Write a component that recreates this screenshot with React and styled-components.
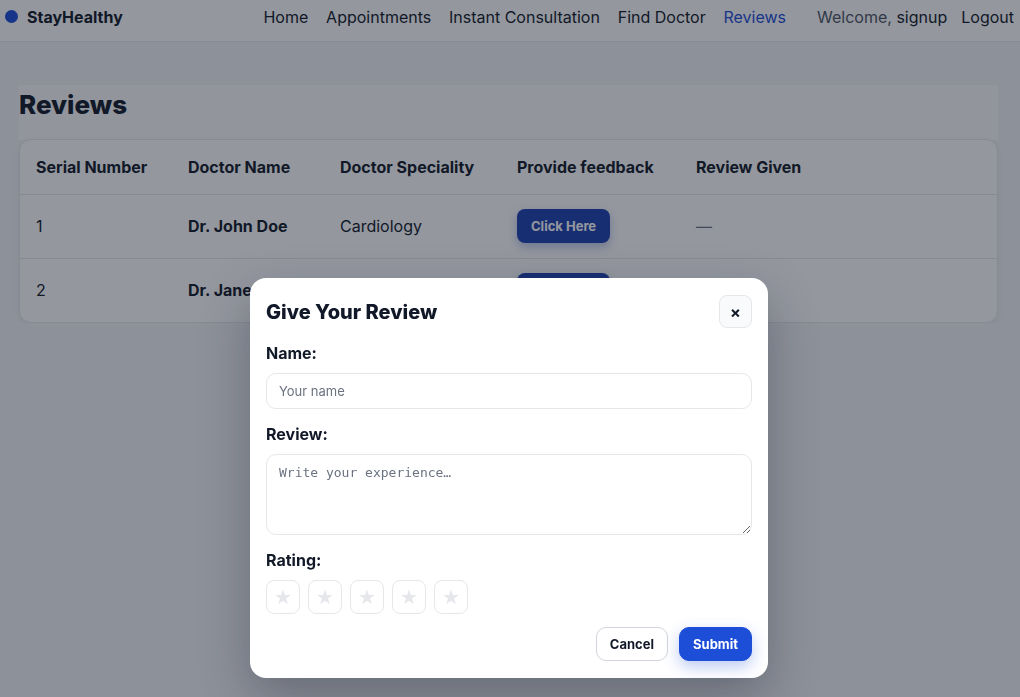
import React from 'react';
import styled, { createGlobalStyle } from 'styled-components';

const GlobalStyle = createGlobalStyle`
  * { box-sizing: border-box; }
  html, body {
    margin: 0;
    padding: 0;
    background: #f3f4f6;
    font-family: Inter, "Noto Sans", "Liberation Sans", sans-serif;
    color: #111827;
  }
`;

const Nav = styled.nav`
  display: flex;
  align-items: center;
  justify-content: space-between;
  height: 42px;
  padding: 0 6px 8px 5px;
  background: #ffffff;
  border-bottom: 1px solid #e5e7eb;
  font-size: 16px;
`;

const Brand = styled.div`
  display: flex;
  align-items: center;
  gap: 9px;
  font-weight: 700;
  font-size: 16px;
`;

const Dot = styled.span`
  width: 13px;
  height: 13px;
  border-radius: 50%;
  background: #1d4ed8;
`;

const NavRight = styled.div`
  display: flex;
  align-items: center;
`;

const Links = styled.ul`
  display: flex;
  gap: 17.8px;
  list-style: none;
  margin: 0 31px 0 0;
  padding: 0;
`;

const Link = styled.li`
  color: ${p => (p.$active ? '#1d4ed8' : '#111827')};
`;

const UserBox = styled.div`
  display: flex;
  gap: 14px;
`;

const Welcome = styled.span`
  color: #4b5563;
  b { font-weight: 400; color: #111827; }
`;

const Main = styled.main`
  padding: 43px 22px 0 19px;
`;

const TitleBar = styled.div`
  background: #fbfbfc;
  padding: 4px 0 19px;
`;

const Heading = styled.h1`
  margin: 0;
  font-size: 26px;
  line-height: 32px;
  font-weight: 800;
`;

const Card = styled.div`
  margin: -1px 0 0 0;
  background: #ffffff;
  border: 1px solid #e5e7eb;
  border-radius: 12px;
  overflow: hidden;
  box-shadow: 0 2px 6px rgba(15, 23, 42, 0.06);
`;

const Table = styled.table`
  width: 100%;
  border-collapse: collapse;
  font-size: 16px;
`;

const Th = styled.th`
  text-align: left;
  font-weight: 700;
  height: 54px;
  padding: 0 0 0 ${p => p.$pad || 0}px;
  width: ${p => p.$w || 'auto'};
  border-bottom: 1px solid #e5e7eb;
`;

const Td = styled.td`
  height: 64px;
  padding: 0 0 0 ${p => p.$pad || 0}px;
  font-weight: ${p => (p.$bold ? 700 : 400)};
  color: ${p => (p.$muted ? '#6b7280' : '#111827')};
`;

const Tr = styled.tr`
  & + & td { border-top: 1px solid #e5e7eb; }
`;

const ClickBtn = styled.button`
  height: 34px;
  padding: 0 14px;
  border: none;
  border-radius: 8px;
  background: #1e40af;
  color: #ffffff;
  font-family: inherit;
  font-size: 13px;
  font-weight: 700;
  box-shadow: 0 4px 10px rgba(30, 64, 175, 0.3);
`;

const Overlay = styled.div`
  position: fixed;
  inset: 0;
  background: rgba(17, 24, 39, 0.45);
  display: flex;
  justify-content: center;
  align-items: flex-start;
  padding: 278px 2px 0 0;
`;

const Modal = styled.div`
  width: 518px;
  background: #ffffff;
  border-radius: 16px;
  padding: 17px 16px 17px 16px;
  box-shadow: 0 20px 50px rgba(15, 23, 42, 0.3);
`;

const ModalHead = styled.div`
  display: flex;
  align-items: center;
  justify-content: space-between;
`;

const ModalTitle = styled.h2`
  margin: 0;
  font-size: 20px;
  font-weight: 800;
`;

const CloseBtn = styled.button`
  width: 33px;
  height: 33px;
  border: 1px solid #e5e7eb;
  border-radius: 8px;
  background: #f8fafc;
  font-family: inherit;
  font-size: 16px;
  font-weight: 700;
  color: #111827;
  padding: 0;
  line-height: 1;
`;

const Field = styled.div`
  margin-top: 15px;
`;

const Label = styled.label`
  display: block;
  font-size: 16px;
  line-height: 20px;
  font-weight: 700;
  margin-bottom: 10px;
`;

const Input = styled.input`
  display: block;
  width: 100%;
  height: 36px;
  padding: 0 12px;
  border: 1px solid #e5e7eb;
  border-radius: 10px;
  font-family: inherit;
  font-size: 13px;
  color: #111827;
  &::placeholder { color: #6b7280; }
`;

const TextArea = styled.textarea`
  display: block;
  width: 100%;
  height: 81px;
  padding: 10px 12px;
  border: 1px solid #e5e7eb;
  border-radius: 10px;
  font-family: "DejaVu Sans Mono", "Liberation Mono", monospace;
  font-size: 13px;
  color: #111827;
  &::placeholder { color: #6b7280; }
`;

const Stars = styled.div`
  display: flex;
  gap: 8px;
`;

const StarBtn = styled.button`
  width: 34px;
  height: 34px;
  padding: 0;
  border: 1px solid #e5e7eb;
  border-radius: 8px;
  background: #ffffff;
  color: #e5e7eb;
  font-size: 20px;
  line-height: 1;
  font-family: "DejaVu Sans", sans-serif;
`;

const Footer = styled.div`
  display: flex;
  justify-content: flex-end;
  gap: 11px;
  margin-top: 13px;
`;

const ActionBtn = styled.button`
  height: 34px;
  padding: 0 13px;
  border-radius: 10px;
  font-family: inherit;
  font-size: 13px;
  font-weight: 700;
  border: 1px solid ${p => (p.$primary ? '#1d4ed8' : '#d1d5db')};
  background: ${p => (p.$primary ? '#1d4ed8' : '#ffffff')};
  color: ${p => (p.$primary ? '#ffffff' : '#111827')};
  box-shadow: ${p => (p.$primary ? '0 6px 16px rgba(29, 78, 216, 0.3)' : 'none')};
`;

const doctors = [
  { id: 1, name: 'Dr. John Doe', speciality: 'Cardiology' },
  { id: 2, name: 'Dr. Jane Smith', speciality: 'Dermatology' },
];

export default function App() {
  return (
    <>
      <GlobalStyle />
      <Nav>
        <Brand><Dot />StayHealthy</Brand>
        <NavRight>
          <Links>
            <Link>Home</Link>
            <Link>Appointments</Link>
            <Link>Instant Consultation</Link>
            <Link>Find Doctor</Link>
            <Link $active>Reviews</Link>
          </Links>
          <UserBox>
            <Welcome>Welcome, <b>signup</b></Welcome>
            <span>Logout</span>
          </UserBox>
        </NavRight>
      </Nav>
      <Main>
        <TitleBar>
          <Heading>Reviews</Heading>
        </TitleBar>
        <Card>
          <Table>
            <thead>
              <tr>
                <Th $pad={16} $w="168px">Serial Number</Th>
                <Th $w="152px">Doctor Name</Th>
                <Th $w="177px">Doctor Speciality</Th>
                <Th $w="179px">Provide feedback</Th>
                <Th>Review Given</Th>
              </tr>
            </thead>
            <tbody>
              {doctors.map(d => (
                <Tr key={d.id}>
                  <Td $pad={16}>{d.id}</Td>
                  <Td $bold>{d.name}</Td>
                  <Td>{d.speciality}</Td>
                  <Td><ClickBtn>Click Here</ClickBtn></Td>
                  <Td $muted>—</Td>
                </Tr>
              ))}
            </tbody>
          </Table>
        </Card>
      </Main>
      <Overlay>
        <Modal>
          <ModalHead>
            <ModalTitle>Give Your Review</ModalTitle>
            <CloseBtn>×</CloseBtn>
          </ModalHead>
          <Field>
            <Label>Name:</Label>
            <Input placeholder="Your name" />
          </Field>
          <Field>
            <Label>Review:</Label>
            <TextArea placeholder="Write your experience…" />
          </Field>
          <Field>
            <Label>Rating:</Label>
            <Stars>
              {[1, 2, 3, 4, 5].map(n => (
                <StarBtn key={n}>★</StarBtn>
              ))}
            </Stars>
          </Field>
          <Footer>
            <ActionBtn>Cancel</ActionBtn>
            <ActionBtn $primary>Submit</ActionBtn>
          </Footer>
        </Modal>
      </Overlay>
    </>
  );
}
